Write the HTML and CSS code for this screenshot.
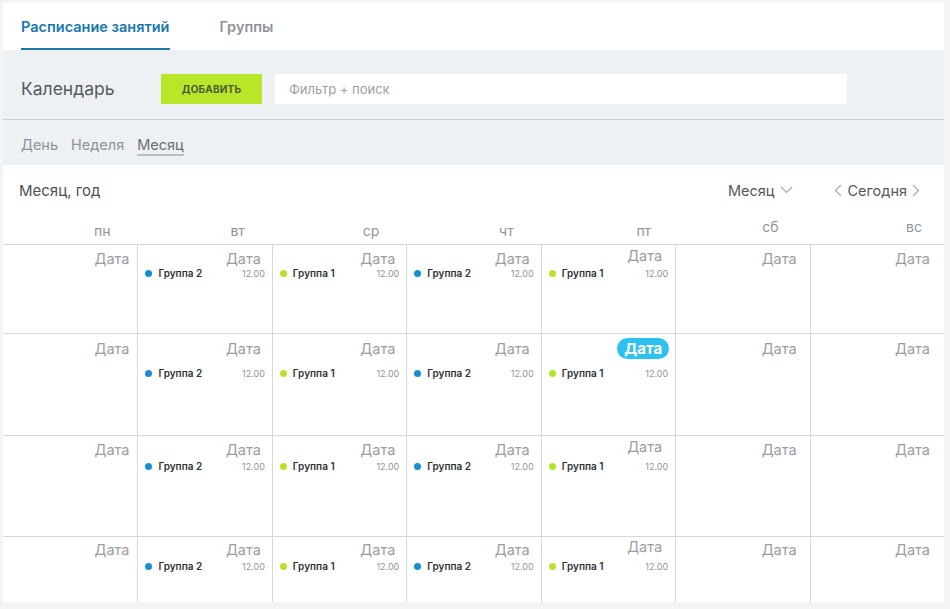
FILE: index.html
```html
<!DOCTYPE html>
<html lang="ru">
<head>
<meta charset="utf-8">
<title>Календарь</title>
<link rel="stylesheet" href="styles.css">
</head>
<body>
<div class="card">
  <nav class="tabs">
    <a class="tab tab-active">Расписание занятий</a>
    <a class="tab">Группы</a>
  </nav>
  <section class="band">
    <div class="toolbar">
      <h1 class="title">Календарь</h1>
      <button class="btn-add">ДОБАВИТЬ</button>
      <div class="search">Фильтр + поиск</div>
    </div>
    <div class="views">
      <span class="view">День</span>
      <span class="view">Неделя</span>
      <span class="view view-active">Месяц</span>
    </div>
  </section>
  <div class="controls">
    <div class="period">Месяц, год</div>
    <div class="ctrl-right">
      <div class="dropdown">Месяц
        <svg width="13" height="8" viewBox="0 0 13 8"><path d="M1 1l5.5 5.5L12 1" fill="none" stroke="#a6abb0" stroke-width="1.2"/></svg>
      </div>
      <div class="nav">
        <svg width="8" height="13" viewBox="0 0 8 13"><path d="M7 1L1.5 6.5 7 12" fill="none" stroke="#a6abb0" stroke-width="1.2"/></svg>
        <span>Сегодня</span>
        <svg width="8" height="13" viewBox="0 0 8 13"><path d="M1 1l5.5 5.5L1 12" fill="none" stroke="#a6abb0" stroke-width="1.2"/></svg>
      </div>
    </div>
  </div>
  <div class="weekdays">
    <div class="wd">пн</div>
    <div class="wd">вт</div>
    <div class="wd">ср</div>
    <div class="wd">чт</div>
    <div class="wd wd-fri">пт</div>
    <div class="wd wd-high">сб</div>
    <div class="wd wd-high wd-sun">вс</div>
  </div>
  <div class="month">
    <div class="week week-1">
      <div class="cell"><div class="date">Дата</div></div>
      <div class="cell"><div class="date">Дата</div><div class="ev"><i class="dot dot-blue"></i><b>Группа 2</b><span class="time">12.00</span></div></div>
      <div class="cell"><div class="date">Дата</div><div class="ev"><i class="dot dot-green"></i><b>Группа 1</b><span class="time">12.00</span></div></div>
      <div class="cell"><div class="date">Дата</div><div class="ev"><i class="dot dot-blue"></i><b>Группа 2</b><span class="time">12.00</span></div></div>
      <div class="cell cell-fri"><div class="date">Дата</div><div class="ev"><i class="dot dot-green"></i><b>Группа 1</b><span class="time">12.00</span></div></div>
      <div class="cell"><div class="date">Дата</div></div>
      <div class="cell"><div class="date">Дата</div></div>
    </div>
    <div class="week week-2">
      <div class="cell"><div class="date">Дата</div></div>
      <div class="cell"><div class="date">Дата</div><div class="ev"><i class="dot dot-blue"></i><b>Группа 2</b><span class="time">12.00</span></div></div>
      <div class="cell"><div class="date">Дата</div><div class="ev"><i class="dot dot-green"></i><b>Группа 1</b><span class="time">12.00</span></div></div>
      <div class="cell"><div class="date">Дата</div><div class="ev"><i class="dot dot-blue"></i><b>Группа 2</b><span class="time">12.00</span></div></div>
      <div class="cell cell-today"><div class="date"><span class="badge">Дата</span></div><div class="ev"><i class="dot dot-green"></i><b>Группа 1</b><span class="time">12.00</span></div></div>
      <div class="cell"><div class="date">Дата</div></div>
      <div class="cell"><div class="date">Дата</div></div>
    </div>
    <div class="week week-3">
      <div class="cell"><div class="date">Дата</div></div>
      <div class="cell"><div class="date">Дата</div><div class="ev"><i class="dot dot-blue"></i><b>Группа 2</b><span class="time">12.00</span></div></div>
      <div class="cell"><div class="date">Дата</div><div class="ev"><i class="dot dot-green"></i><b>Группа 1</b><span class="time">12.00</span></div></div>
      <div class="cell"><div class="date">Дата</div><div class="ev"><i class="dot dot-blue"></i><b>Группа 2</b><span class="time">12.00</span></div></div>
      <div class="cell cell-fri"><div class="date">Дата</div><div class="ev"><i class="dot dot-green"></i><b>Группа 1</b><span class="time">12.00</span></div></div>
      <div class="cell"><div class="date">Дата</div></div>
      <div class="cell"><div class="date">Дата</div></div>
    </div>
    <div class="week week-4">
      <div class="cell"><div class="date">Дата</div></div>
      <div class="cell"><div class="date">Дата</div><div class="ev"><i class="dot dot-blue"></i><b>Группа 2</b><span class="time">12.00</span></div></div>
      <div class="cell"><div class="date">Дата</div><div class="ev"><i class="dot dot-green"></i><b>Группа 1</b><span class="time">12.00</span></div></div>
      <div class="cell"><div class="date">Дата</div><div class="ev"><i class="dot dot-blue"></i><b>Группа 2</b><span class="time">12.00</span></div></div>
      <div class="cell cell-fri"><div class="date">Дата</div><div class="ev"><i class="dot dot-green"></i><b>Группа 1</b><span class="time">12.00</span></div></div>
      <div class="cell"><div class="date">Дата</div></div>
      <div class="cell"><div class="date">Дата</div></div>
    </div>
  </div>
</div>
</body>
</html>
```

FILE: styles.css
```css
* { box-sizing: border-box; }

html, body {
  margin: 0;
  padding: 0;
  background: #f3f4f5;
  font-family: Inter, "Noto Sans", "Liberation Sans", sans-serif;
}

.card {
  margin: 3px 0 0 3px;
  width: 941px;
  height: 599px;
  background: #fff;
  overflow: hidden;
}

/* tabs */
.tabs {
  display: flex;
  height: 47px;
  padding-left: 18px;
  gap: 50px;
}
.tab {
  display: block;
  padding-top: 14px;
  font-size: 14.5px;
  font-weight: 600;
  color: #8d9398;
  line-height: 19px;
  border-bottom: 2px solid transparent;
}
.tab-active {
  color: #1a78ad;
  border-bottom-color: #1a78ad;
}

/* band */
.band {
  background: #edf1f4;
}
.toolbar {
  display: flex;
  align-items: center;
  height: 70px;
  padding: 8px 0 0 18px;
  border-bottom: 1px solid #c8cdd2;
}
.title {
  margin: 0;
  width: 140px;
  font-size: 17.5px;
  font-weight: 400;
  color: #565b60;
}
.btn-add {
  width: 101px;
  height: 30px;
  border: none;
  background: #b8e628;
  color: #4f5a3b;
  font-family: inherit;
  font-size: 10px;
  font-weight: 700;
  letter-spacing: 0.2px;
  margin-right: 13px;
}
.search {
  width: 572px;
  height: 30px;
  background: #fff;
  color: #9b9fa4;
  font-size: 13px;
  line-height: 30px;
  padding-left: 14px;
}
.views {
  display: flex;
  gap: 13px;
  height: 45px;
  padding: 15px 0 0 18px;
}
.view {
  font-size: 14.5px;
  color: #8d9398;
  line-height: 19px;
  height: 21px;
}
.view-active {
  color: #6a6f74;
  border-bottom: 2px solid #b9bec3;
}

/* controls */
.controls {
  display: flex;
  justify-content: space-between;
  align-items: center;
  height: 50px;
  padding: 0 24px 0 16px;
}
.period {
  font-size: 15px;
  color: #4c5055;
}
.ctrl-right {
  display: flex;
  align-items: center;
  gap: 41px;
}
.dropdown, .nav {
  display: flex;
  align-items: center;
  font-size: 14.5px;
  color: #54595e;
}
.dropdown { gap: 6px; }
.nav { gap: 5px; }

/* weekday header */
.weekdays {
  display: grid;
  grid-template-columns: repeat(7, 1fr);
  height: 29px;
}
.wd {
  text-align: right;
  padding-right: 27px;
  font-size: 14px;
  color: #8f959a;
  line-height: 17px;
  padding-top: 7px;
}
.wd-fri { padding-right: 24px; }
.wd-high { padding-top: 3px; padding-right: 31px; }
.wd-sun { padding-right: 22px; }

/* month grid */
.month {
  border-top: 1px solid #d5d8db;
}
.week {
  display: grid;
  grid-template-columns: repeat(7, 1fr);
  border-bottom: 1px solid #d5d8db;
}
.week-1 { height: 89px; }
.week-2 { height: 102px; }
.week-3 { height: 101px; }
.week-4 { height: 101px; }

.cell {
  display: flex;
  flex-direction: column;
  border-left: 1px solid #d5d8db;
  padding-top: 4px;
}
.cell:first-child { border-left: none; }

.date {
  text-align: right;
  padding-right: 11px;
  font-size: 14.5px;
  color: #9a9ea3;
  line-height: 19px;
  height: 19px;
  flex: none;
}
.cell:first-child .date { padding-right: 8px; }
.cell:nth-child(n+5) .date { padding-right: 13px; }
.cell:nth-child(7) .date { padding-right: 14px; }
.cell-fri .date {
  margin-top: -3px;
  margin-bottom: 3px;
}
.week-2 .cell { padding-top: 5px; }
.week-2 .ev { margin-top: 8px; }
.week-4 .cell { padding-top: 3px; }
.week-1 .ev { margin-top: -2px; }

.badge {
  display: inline-block;
  height: 21px;
  line-height: 21px;
  margin-top: -1px;
  padding: 0 7px;
  border-radius: 11px;
  background: #2ec1f0;
  color: #fff;
  font-size: 15px;
  font-weight: 700;
}
.week-2 .cell-today .date { padding-right: 6px; }

.ev {
  display: flex;
  align-items: center;
  height: 14px;
  padding: 0 7px 0 7px;
  flex: none;
}
.dot {
  width: 7px;
  height: 7px;
  border-radius: 50%;
  margin-right: 6px;
  flex: none;
}
.dot-blue { background: #168ed0; }
.dot-green { background: #b5e22a; }
.ev b {
  font-size: 10px;
  font-weight: 600;
  color: #2f3336;
}
.time {
  margin-left: auto;
  font-size: 9px;
  color: #8f959a;
}
```
